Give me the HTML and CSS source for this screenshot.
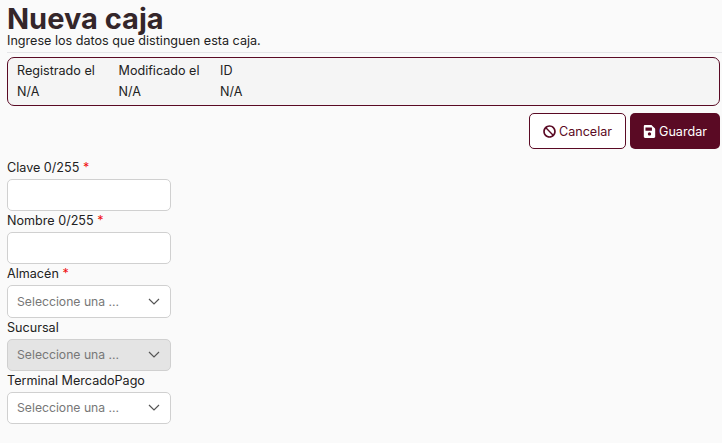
FILE: index.html
```html
<!DOCTYPE html>
<html lang="es">
<head>
    <meta charset="UTF-8">
    <title>Nueva caja</title>
    <link rel="stylesheet" href="styles.css">
</head>
<body>
    <header class="page-header">
        <h1>Nueva caja</h1>
        <p>Ingrese los datos que distinguen esta caja.</p>
    </header>
    <div class="audit-card">
        <div class="audit-item"><span>Registrado el</span><span>N/A</span></div>
        <div class="audit-item"><span>Modificado el</span><span>N/A</span></div>
        <div class="audit-item"><span>ID</span><span>N/A</span></div>
    </div>
    <div class="actions">
        <button class="button button-outline">
            <svg class="icon" viewBox="0 0 512 512"><path fill="currentColor" d="M256 8C119 8 8 119 8 256s111 248 248 248 248-111 248-248S393 8 256 8zm130 116c65 65 69 167 14 237L151 112c70-55 172-51 235 12zM126 388c-65-65-69-167-14-237l249 249c-70 55-172 51-235-12z"/></svg>
            Cancelar
        </button>
        <button class="button button-solid">
            <svg class="icon" viewBox="0 0 448 512"><path fill="currentColor" d="M433 129L319 15c-9-9-21-15-34-15H48C21 0 0 21 0 48v416c0 27 21 48 48 48h352c27 0 48-21 48-48V163c0-13-5-25-15-34zM224 416c-35 0-64-29-64-64s29-64 64-64 64 29 64 64-29 64-64 64zm96-304v100c0 7-5 12-12 12H76c-7 0-12-5-12-12V108c0-7 5-12 12-12h228c3 0 6 1 8 4l4 4c3 2 4 5 4 8z"/></svg>
            Guardar
        </button>
    </div>
    <form class="form">
        <div class="field">
            <label>Clave 0/255 <span class="required">*</span></label>
            <input type="text" class="input">
        </div>
        <div class="field">
            <label>Nombre 0/255 <span class="required">*</span></label>
            <input type="text" class="input">
        </div>
        <div class="field">
            <label>Almacén <span class="required">*</span></label>
            <div class="select">
                <span>Seleccione una …</span>
                <svg class="chevron" viewBox="0 0 12 7"><path d="M1 1l5 5 5-5" fill="none" stroke="currentColor" stroke-width="1.2"/></svg>
            </div>
        </div>
        <div class="field">
            <label>Sucursal</label>
            <div class="select select-disabled">
                <span>Seleccione una …</span>
                <svg class="chevron" viewBox="0 0 12 7"><path d="M1 1l5 5 5-5" fill="none" stroke="currentColor" stroke-width="1.2"/></svg>
            </div>
        </div>
        <div class="field">
            <label>Terminal MercadoPago</label>
            <div class="select">
                <span>Seleccione una …</span>
                <svg class="chevron" viewBox="0 0 12 7"><path d="M1 1l5 5 5-5" fill="none" stroke="currentColor" stroke-width="1.2"/></svg>
            </div>
        </div>
    </form>
</body>
</html>
```
FILE: styles.css
```css
body {
    font-family: Inter, "Noto Sans", sans-serif;
    font-size: 12.6px;
    margin: 0;
    padding: 0 2px 0 7px;
    height: 443px;
    box-sizing: border-box;
    overflow: hidden;
    background-color: #FAFAFA;
    color: #222;
}
.page-header {
    padding-bottom: 4px;
    border-bottom: 1px solid #E5E5E8;
    margin-right: -2px;
}
.page-header h1 {
    margin: 0;
    padding-top: 4px;
    font-size: 29px;
    line-height: 30px;
    font-weight: 700;
    color: #34262A;
}
.page-header p {
    margin: 0;
    line-height: 14px;
}
.audit-card {
    display: flex;
    margin-top: 4px;
    height: 49px;
    box-sizing: border-box;
    padding: 5px 9px;
    border: 1px solid #5A0A24;
    border-radius: 7px;
    background-color: #F5F5F5;
}
.audit-item {
    width: 101.5px;
    display: flex;
    flex-direction: column;
    gap: 6px;
    line-height: 15px;
}
.actions {
    display: flex;
    justify-content: flex-end;
    gap: 4px;
    margin-top: 7px;
}
.button {
    height: 36px;
    display: flex;
    align-items: center;
    justify-content: center;
    gap: 3px;
    font-family: inherit;
    font-size: 12.6px;
    border-radius: 5px;
    cursor: pointer;
}
.button-outline {
    width: 97px;
    border: 1px solid #5A0A24;
    background-color: #fff;
    color: #5A0A24;
}
.button-solid {
    width: 90px;
    border: none;
    background-color: #5A0A24;
    color: #fff;
}
.icon {
    width: 13px;
    height: 13px;
}
.form {
    margin-top: 10.8px;
}
.field {
    width: 164px;
}
.field label {
    display: block;
    line-height: 15px;
    white-space: nowrap;
    margin-bottom: 4px;
}
.required {
    color: #F01010;
}
.input,
.select {
    display: flex;
    width: 100%;
    height: 32.25px;
    box-sizing: border-box;
    margin: 0 0 2px;
    border: 1px solid #D0D0D0;
    border-radius: 5px;
    background-color: #fff;
}
.select {
    align-items: center;
    justify-content: space-between;
    padding: 0 10px 0 9px;
    font-size: 12.2px;
    color: #777;
}
.select-disabled {
    background-color: #E4E4E4;
}
.chevron {
    width: 12px;
    height: 7px;
    color: #555;
}
```
